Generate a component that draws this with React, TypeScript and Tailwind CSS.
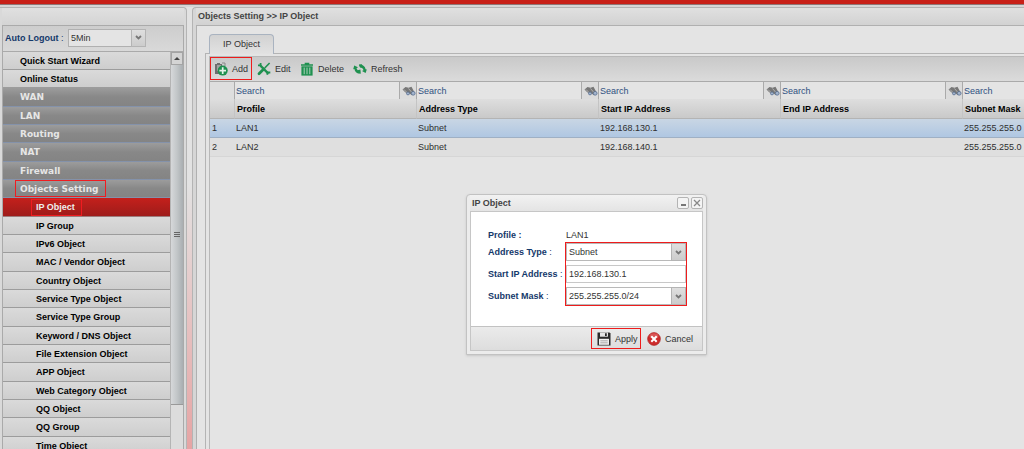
import { clsx } from 'clsx'

type MenuKind = 'link' | 'section' | 'sub' | 'active'

interface MenuItem {
  label: string
  kind: MenuKind
  marked?: boolean
}

const MENU: MenuItem[] = [
  { label: 'Quick Start Wizard', kind: 'link' },
  { label: 'Online Status', kind: 'link' },
  { label: 'WAN', kind: 'section' },
  { label: 'LAN', kind: 'section' },
  { label: 'Routing', kind: 'section' },
  { label: 'NAT', kind: 'section' },
  { label: 'Firewall', kind: 'section' },
  { label: 'Objects Setting', kind: 'section', marked: true },
  { label: 'IP Object', kind: 'active', marked: true },
  { label: 'IP Group', kind: 'sub' },
  { label: 'IPv6 Object', kind: 'sub' },
  { label: 'MAC / Vendor Object', kind: 'sub' },
  { label: 'Country Object', kind: 'sub' },
  { label: 'Service Type Object', kind: 'sub' },
  { label: 'Service Type Group', kind: 'sub' },
  { label: 'Keyword / DNS Object', kind: 'sub' },
  { label: 'File Extension Object', kind: 'sub' },
  { label: 'APP Object', kind: 'sub' },
  { label: 'Web Category Object', kind: 'sub' },
  { label: 'QQ Object', kind: 'sub' },
  { label: 'QQ Group', kind: 'sub' },
  { label: 'Time Object', kind: 'sub' },
]

const MENU_STYLES: Record<MenuKind, string> = {
  link: 'pl-3 text-black bg-linear-to-b from-[#dadada] to-[#cecece] border-b-[#9c9c9c]',
  section:
    "pl-3 font-['DejaVu_Sans',sans-serif] text-[#e6e6e6] bg-linear-to-b from-[#9c9c9c] via-[#888888] to-[#848484] border-b-[#8492aa]",
  sub: 'pl-[28px] text-black bg-linear-to-b from-[#dadada] to-[#cecece] border-b-[#9c9c9c]',
  active:
    'pl-[28px] text-[#eeeeee] bg-linear-to-b from-[#c4201c] to-[#9e1c1a] border-b-[#9c7c7c]',
}

const COLUMNS = ['Profile', 'Address Type', 'Start IP Address', 'End IP Address', 'Subnet Mask']

const ROWS = [
  ['LAN1', 'Subnet', '192.168.130.1', '', '255.255.255.0'],
  ['LAN2', 'Subnet', '192.168.140.1', '', '255.255.255.0'],
]

function AddIcon() {
  return (
    <svg viewBox="0 0 14 14" className="size-[14px]">
      <path d="M1 2h2V1h3v1h2v10H1z" fill="#6e6e6e" />
      <path d="M3 4h4M3 6h3M3 8h2" stroke="#d2d2d2" strokeWidth="1" />
      <path d="M8 1h3v3" fill="none" stroke="#8a8a8a" strokeWidth="1" />
      <circle cx="8.7" cy="8.6" r="5" fill="#1f9150" />
      <path d="M8.7 5.3v6.6M5.4 8.6h6.6" stroke="#e6f2ea" strokeWidth="1.7" />
    </svg>
  )
}

function EditIcon() {
  return (
    <svg viewBox="0 0 14 14" className="size-[14px]" fill="none" stroke="#1f9150">
      <path d="M12.6 1 8 5.8" strokeWidth="1.6" />
      <path d="m7 6.8-5 5" strokeWidth="2.8" strokeLinecap="round" />
      <path d="m3.4 3.6 8 8" strokeWidth="2.2" />
      <path d="M1 3.3h2.6V.9" strokeWidth="1.8" />
      <path d="M10.4 12.7v-2.2h2.9" strokeWidth="1.8" />
    </svg>
  )
}

function TrashIcon() {
  return (
    <svg viewBox="0 0 14 14" className="size-[14px]">
      <path d="M1 2.2h3.7V.7h4.6v1.5H13v1.6H1z" fill="#1f9150" />
      <path d="M1.4 4.3h11.2V13.6H1.4z" fill="#1f9150" />
      <path d="M4.2 5.6v6.6M7 5.6v6.6M9.8 5.6v6.6" stroke="#cfe0d6" strokeWidth="0.8" />
    </svg>
  )
}

function RefreshIcon() {
  return (
    <svg viewBox="0 0 14 14" className="size-[14px]">
      <path d="M.2 7.2 1.2 3.6 5 5.2 3.500 6.200C4 7.800 5.200 8.800 7.200 9.200L6.400 11.600C3.600 11.400 1.800 9.800 1.400 7z" fill="#1f9150" />
      <path d="M13.800 7.400 12.600 11 9 9 10.500 8.200C10.200 6.600 9 5.400 7 4.900L6 2.800C9.400 2.200 12 3.800 12.600 7.200z" fill="#1f9150" />
      <path d="M4.600 8.200 7.400 7.400 7.800 11.800 5.400 11.200zM6 2.600 9 2.200 9.400 5.800 7 5.400z" fill="#1f9150" />
    </svg>
  )
}

function BinocularsIcon() {
  return (
    <svg viewBox="0 0 14 10" className="h-[10px] w-[14px]">
      <path d="M.5 3.500 3.500 1l3 .8L9.500.8l2 3.700 1.500 3-3 1.800L7.500 7.500 5.500 8 3 6z" fill="#777777" />
      <path d="m2 3.500 4 4M6.500 2.500l3.500 4" stroke="#b5b5b5" strokeWidth="0.9" />
      <circle cx="6" cy="7.400" r="1.500" fill="#a3b4cc" stroke="#51698c" strokeWidth="0.7" />
      <circle cx="11.200" cy="7.300" r="1.900" fill="#a3b4cc" stroke="#51698c" strokeWidth="0.7" />
    </svg>
  )
}

function SaveIcon() {
  return (
    <svg viewBox="0 0 14 14" className="size-[14px]">
      <path d="M.5 .5h12L13.500 1.500v12H.5z" fill="#2b2b2b" />
      <path d="M3 .5h8v4.200H3z" fill="#e4e4e4" />
      <path d="M8 1.200h1.800v2.800H8z" fill="#2b2b2b" />
      <path d="M2 6.800h10v6H2z" fill="#f0f0f0" />
      <path d="M3.300 8.800h7.400M3.300 10.800h7.400" stroke="#9a9a9a" strokeWidth="0.8" />
    </svg>
  )
}

function CancelIcon() {
  return (
    <svg viewBox="0 0 14 14" className="size-[14px]">
      <circle cx="7" cy="7" r="6.400" fill="#cc2b2b" stroke="#a81f1f" strokeWidth="0.6" />
      <ellipse cx="7" cy="4" rx="4.500" ry="2.700" fill="#e27070" opacity="0.6" />
      <path d="m4.300 4.300 5.400 5.400M9.700 4.300 4.300 9.700" stroke="#ffffff" strokeWidth="2" />
    </svg>
  )
}

interface ComboProps {
  id: string
  value: string
  dim?: boolean
}

function Combo({ id, value, dim }: ComboProps) {
  return (
    <div className="relative flex h-[18px]">
      <select
        id={id}
        className={clsx(
          'w-full appearance-none rounded-none border pr-4 pl-[2px] outline-none',
          dim ? 'border-[#b0b0b0] bg-[#e4e4e4] text-[#333333]' : 'border-[#b9b9b9] bg-white text-[#333333]',
        )}
      >
        <option>{value}</option>
      </select>
      {/* Arrow trigger */}
      <span className="pointer-events-none absolute inset-y-0 right-0 flex w-[15px] items-center justify-center border border-[#b4b4b4] bg-linear-to-b from-[#dfdfdf] to-[#cccccc]">
        <svg viewBox="0 0 7 5" className="h-[5px] w-[7px]" fill="none" stroke="#777777" strokeWidth="1.800">
          <path d="m1 1 2.500 2.500L6 1" />
        </svg>
      </span>
    </div>
  )
}

function Sidebar() {
  return (
    <aside className="flex w-[187px] shrink-0 flex-col rounded-tr border-t border-r border-[#b4b4b4] bg-[#d9d9d9] pr-[2px] pl-[2px]">
      <div className="h-[17px] shrink-0 bg-linear-to-b from-[#e0e0e0] to-[#d4d4d4]" />
      <div className="flex min-h-0 flex-1 flex-col border border-b-0 border-[#aaaaaa]">
        <div className="flex h-[25px] shrink-0 items-center bg-linear-to-b from-[#cdcdcd] to-[#d9d9d9] pb-[2px] pl-[2px]">
          <label htmlFor="logout" className="w-[63px] whitespace-nowrap font-bold text-[#15396b]">
            Auto Logout <span className="font-normal">:</span>
          </label>
          <div className="w-[78px]">
            <Combo id="logout" value="5Min" dim />
          </div>
        </div>
        <div className="flex min-h-0 flex-1 border-t border-[#aaaaaa]">
          <nav className="min-w-0 flex-1 overflow-hidden">
            <ul>
              {MENU.map((item) => (
                <li key={item.label} className="h-[18px] nth-[3n]:h-[19px]">
                  <a
                    href="#"
                    className={clsx('flex h-full items-center border-b font-bold', MENU_STYLES[item.kind])}
                  >
                    <span
                      className={clsx(
                        'flex h-[17px] items-center border pr-[6px] pl-1',
                        item.marked ? 'border-[#f01c20]' : 'border-transparent',
                      )}
                    >
                      {item.label}
                    </span>
                  </a>
                </li>
              ))}
            </ul>
          </nav>
          {/* Scrollbar */}
          <div className="flex w-[13px] shrink-0 flex-col border-l border-[#b4b4b4] bg-[#dcdcdc]">
            <button
              aria-label="Scroll up"
              className="flex h-[13px] shrink-0 items-center justify-center border border-[#a4a4a4] bg-[#d4d4d4]"
            >
              <svg viewBox="0 0 6 3" className="h-[3px] w-[6px]" fill="#444444">
                <path d="M0 3 3 0l3 3z" />
              </svg>
            </button>
            <div className="flex flex-[31] flex-col items-center justify-center gap-px border-b border-[#999999] bg-linear-to-r from-[#d6d8da] via-[#c2c6c8] to-[#a9aeb1]">
              <span className="h-px w-[6px] bg-[#666666]" />
              <span className="h-px w-[6px] bg-[#666666]" />
              <span className="h-px w-[6px] bg-[#666666]" />
            </div>
            <div className="flex-[4]" />
          </div>
        </div>
      </div>
    </aside>
  )
}

function Toolbar() {
  const tool = 'flex h-[23px] items-center gap-[4px] border pl-[3px] pr-[2px]'
  return (
    <div className="flex h-[25px] items-start border-t border-[#b8b8b8] bg-linear-to-b from-[#c9c9c9] to-[#dbdbdb]">
      <button className={clsx(tool, 'w-[42px] border-[#ee1c1c]')}>
        <AddIcon />
        Add
      </button>
      <button className={clsx(tool, 'ml-[1px] w-[43px] border-transparent')}>
        <EditIcon />
        Edit
      </button>
      <button className={clsx(tool, 'w-[53px] border-transparent')}>
        <TrashIcon />
        Delete
      </button>
      <button className={clsx(tool, 'w-[60px] border-transparent')}>
        <RefreshIcon />
        Refresh
      </button>
    </div>
  )
}

function ObjectTable() {
  return (
    <table className="w-[934px] table-fixed border-separate border-spacing-0 text-left">
      <colgroup>
        <col className="w-[24px]" />
        {COLUMNS.map((name) => (
          <col key={name} className="w-[182px]" />
        ))}
      </colgroup>
      <thead>
        <tr className="h-[18px]">
          <td className="border-t border-[#aaaaaa] bg-[#dedede] p-0" />
          {COLUMNS.map((name) => (
            <td key={name} className="border-t border-l border-[#aaaaaa] p-0">
              <div className="flex h-[17px]">
                <input
                  aria-label={`Search ${name}`}
                  placeholder="Search"
                  className="min-w-0 flex-1 border-r border-[#aaaaaa] bg-[#e4e4e4] pl-[1px] outline-none placeholder:text-[#2f5080]"
                />
                <button aria-label={`Find ${name}`} className="flex w-4 items-center justify-end bg-[#dcdcdc]">
                  <BinocularsIcon />
                </button>
              </div>
            </td>
          ))}
        </tr>
        <tr className="h-[20px] bg-linear-to-b from-[#dedede] to-[#c8c8c8]">
          <th className="border-b border-[#b4b4b4] p-0" />
          {COLUMNS.map((name) => (
            <th key={name} scope="col" className="border-b border-l border-b-[#b4b4b4] border-l-[#c4c4c4] p-0 pl-[2px] font-bold text-black">
              {name}
            </th>
          ))}
        </tr>
      </thead>
      <tbody className="text-[#2e2e2e]">
        {ROWS.map((row, i) => (
          <tr
            key={row[0]}
            className={clsx('h-[19px]', i === 0 ? 'bg-linear-to-b from-[#c9d6e4] to-[#aec6e2]' : 'bg-[#dfdfdf]')}
          >
            <td className={clsx('border-b p-0 pl-[2px]', i === 0 ? 'border-[#9fb0c4]' : 'border-[#d6d6d6]')}>
              {i + 1}
            </td>
            {row.map((value, col) => (
              <td
                key={COLUMNS[col]}
                className={clsx('border-b p-0 pl-[2px]', i === 0 ? 'border-[#9fb0c4]' : 'border-[#d6d6d6]')}
              >
                {value}
              </td>
            ))}
          </tr>
        ))}
      </tbody>
    </table>
  )
}

function Dialog() {
  const label = 'w-[78px] shrink-0 whitespace-nowrap font-bold text-[#15396b]'
  return (
    <div
      role="dialog"
      aria-labelledby="dialog-title"
      className="absolute top-[194px] left-[466px] w-[241px] rounded-t border border-[#c2c2c2] bg-[#ececec] px-[3px] pb-[3px] shadow-sm"
    >
      <div className="flex h-4 items-center gap-[2px] bg-linear-to-b from-[#f2f2f2] to-[#e4e4e4] pl-[2px]">
        <h2 id="dialog-title" className="flex-1 font-bold text-[#444444]">
          IP Object
        </h2>
        <button aria-label="Minimize" className="flex size-3 items-end justify-center rounded-xs border border-[#b4b4b4] bg-[#f4f4f4] pb-[2px]">
          <span className="h-[2px] w-[5px] bg-[#777777]" />
        </button>
        <button aria-label="Close" className="flex size-3 items-center justify-center rounded-xs border border-[#b4b4b4] bg-[#f4f4f4]">
          <svg viewBox="0 0 8 8" className="size-2" stroke="#888888" strokeWidth="1.300">
            <path d="m1 1 6 6M7 1 1 7" />
          </svg>
        </button>
      </div>

      <form className="border border-[#c6c6c6] text-[#333333]">
        {/* Fields */}
        <div className="bg-white pt-[14px] pr-4 pb-[21px] pl-[17px]">
          <div className="flex h-[17px] items-center">
            <span className={label}>Profile :</span>
            <span>LAN1</span>
          </div>
          <div className="flex">
            <div className="flex flex-col gap-1">
              <label htmlFor="type" className={clsx(label, 'flex h-[18px] items-center')}>
                Address Type&nbsp;<span className="font-normal">:</span>
              </label>
              <label htmlFor="start" className={clsx(label, 'flex h-[18px] items-center')}>
                Start IP Address&nbsp;<span className="font-normal">:</span>
              </label>
              <label htmlFor="mask" className={clsx(label, 'flex h-[18px] items-center')}>
                Subnet Mask&nbsp;<span className="font-normal">:</span>
              </label>
            </div>
            <div className="flex min-w-0 flex-1 flex-col gap-1 outline outline-[#ee1c1c]">
              <Combo id="type" value="Subnet" />
              <input
                id="start"
                defaultValue="192.168.130.1"
                className="h-[18px] w-full border border-[#c8c8c8] bg-white pl-[2px] outline-none"
              />
              <Combo id="mask" value="255.255.255.0/24" />
            </div>
          </div>
        </div>

        {/* Actions */}
        <div className="flex h-[24px] items-center justify-end border-t border-[#c2c2c2] bg-linear-to-b from-[#ebebeb] to-[#dddddd] pr-[9px]">
          <button type="button" className="flex h-[21px] w-[50px] items-center gap-[4px] border border-[#ee1c1c] pl-[5px]">
            <SaveIcon />
            Apply
          </button>
          <button type="button" className="flex h-[21px] items-center gap-[4px] pl-[6px]">
            <CancelIcon />
            Cancel
          </button>
        </div>
      </form>
    </div>
  )
}

export default function App() {
  return (
    <div className="relative flex h-screen flex-col overflow-hidden bg-[#e2e2e2] font-['Liberation_Sans',Arial,sans-serif] text-[9px] leading-3 text-[#333333]">
      <header className="h-[7px] shrink-0 border-b-2 border-[#d6d6d6] bg-[#c82018]">
        <div className="mt-[4px] h-px bg-[#8f7676]" />
      </header>

      <div className="flex min-h-0 flex-1">
        <Sidebar />
        <div className="w-[5px] shrink-0 bg-linear-to-b from-[#e2e2e2] from-40% to-[#e6a4a4]" />

        <main className="flex min-w-0 flex-1 flex-col rounded-tl border-t border-l border-[#b4b4b4] bg-[#d6d6d6] pl-[3px]">
          <h1 className="flex h-[17px] shrink-0 items-center bg-linear-to-b from-[#e0e0e0] to-[#d2d2d2] pb-[2px] pl-[2px] font-bold text-[#444444]">
            Objects Setting &gt;&gt; IP Object
          </h1>
          <div className="flex min-h-0 flex-1 flex-col border-t border-l border-[#b0b0b0] bg-[#e4e4e4] pt-2 pl-2">
            <div className="flex h-[19px] shrink-0 pl-1">
              <button
                role="tab"
                aria-selected="true"
                className="z-10 -mb-px w-[65px] rounded-t border border-b-0 border-[#a9b3c0] bg-linear-to-b from-[#d2d2d2] to-[#e2e2e2] pb-[2px]"
              >
                IP Object
              </button>
            </div>
            <div className="flex min-h-0 flex-1 flex-col border-t border-l border-[#b4b4b4] pt-[2px] pl-[3px]">
              <div className="min-h-0 flex-1 overflow-hidden border-l border-[#b8b8b8]">
                <Toolbar />
                <ObjectTable />
              </div>
            </div>
          </div>
        </main>
      </div>

      <Dialog />
    </div>
  )
}
